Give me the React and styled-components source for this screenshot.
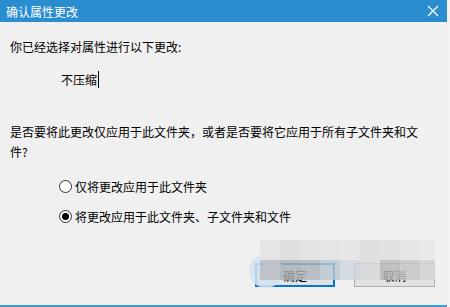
import React from "react";
import styled, { createGlobalStyle } from "styled-components";

const GlobalStyle = createGlobalStyle`
  html, body {
    margin: 0;
    padding: 0;
    background: #f3f3f3;
  }
  body {
    font-family: "Noto Sans CJK SC", "Microsoft YaHei", sans-serif;
    font-size: 12px;
    color: #000;
  }
`;

const Window = styled.div`
  width: 447px;
  height: 307px;
  box-sizing: border-box;
  background: #f0f0f0;
  border-bottom: 2px solid #3c9ad6;
  display: flex;
  flex-direction: column;
  position: relative;
`;

const TitleBar = styled.div`
  height: 22px;
  background: #2a8dcf;
  color: #fff;
  display: flex;
  align-items: center;
  justify-content: space-between;
  padding: 0 8px 0 6px;
  font-size: 12px;
`;

const Body = styled.div`
  flex: 1;
  display: flex;
  flex-direction: column;
  padding: 17px 0 0 10px;
`;

const Line = styled.div`
  line-height: 16px;
  padding-left: ${(p) => p.$indent || 0}px;
  margin-top: ${(p) => p.$top || 0}px;
`;

const Value = styled.span`
  border-right: 1px solid #000;
  padding-right: 1px;
`;

const Question = styled.div`
  width: 414px;
  line-height: 20px;
  margin-top: 34px;
`;

const Radios = styled.div`
  display: flex;
  flex-direction: column;
  gap: 14px;
  padding-left: 49px;
  margin-top: 16px;
`;

const RadioRow = styled.label`
  display: flex;
  align-items: center;
  gap: 3px;
  height: 16px;
`;

const RadioDot = styled.span`
  width: 13px;
  height: 13px;
  box-sizing: border-box;
  border: 1px solid #333;
  border-radius: 50%;
  background: #fff;
  display: flex;
  align-items: center;
  justify-content: center;
  &::after {
    content: "";
    width: 7px;
    height: 7px;
    border-radius: 50%;
    background: ${(p) => (p.$on ? "#000" : "transparent")};
  }
`;

const Buttons = styled.div`
  display: flex;
  gap: 19px;
  margin-top: auto;
  margin-bottom: 18px;
  padding-left: 245px;
`;

const Button = styled.div`
  width: ${(p) => p.$w}px;
  height: 24px;
  box-sizing: border-box;
  background: #e1e1e1;
  border: ${(p) => (p.$focus ? "2px solid #0078d7" : "1px solid #adadad")};
  display: flex;
  align-items: center;
  justify-content: center;
`;

const Mosaic = styled.div`
  position: absolute;
  left: 260px;
  top: 240px;
  width: 175px;
  display: grid;
  grid-template-columns: repeat(8, 20px) 15px;
  grid-auto-rows: 20px;
  opacity: 0.8;
`;

const Cell = styled.div`
  background: ${(p) => p.$c};
`;

const Blob = styled.div`
  position: absolute;
  left: 249px;
  top: 254px;
  width: 34px;
  height: 34px;
  border-radius: 50%;
  background: #d3e3ef;
  opacity: 0.85;
`;

const mosaic = [
  "#e4e4e4", "#dcdcdc", "#e2e2e2", "#e3e3e3", "#e5e5e5", "#dcdcdc", "#dedede", "#e4e4e4", "#e8e8e8",
  "#b8bcc0", "#aab1b8", "#b0b6bd", "#bac7d3", "#cfd6dd", "#d9dadb", "#b8b8b8", "#c6c6c6", "#d3d3d3",
];

export default function App() {
  return (
    <>
      <GlobalStyle />
      <Window>
        <TitleBar>
          <span>确认属性更改</span>
          <svg width="12" height="12" viewBox="0 0 12 12">
            <path d="M1 1L11 11M11 1L1 11" stroke="#fff" strokeWidth="1.2" />
          </svg>
        </TitleBar>
        <Body>
          <Line>你已经选择对属性进行以下更改:</Line>
          <Line $indent={51} $top={17}>
            <Value>不压缩</Value>
          </Line>
          <Question>
            是否要将此更改仅应用于此文件夹，或者是否要将它应用于所有子文件夹和文件?
          </Question>
          <Radios>
            <RadioRow>
              <RadioDot />
              仅将更改应用于此文件夹
            </RadioRow>
            <RadioRow>
              <RadioDot $on />
              将更改应用于此文件夹、子文件夹和文件
            </RadioRow>
          </Radios>
          <Buttons>
            <Button $w={80} $focus>确定</Button>
            <Button $w={81}>取消</Button>
          </Buttons>
        </Body>
        <Blob />
        <Mosaic>
          {mosaic.map((c, i) => (
            <Cell key={i} $c={c} />
          ))}
        </Mosaic>
      </Window>
    </>
  );
}
